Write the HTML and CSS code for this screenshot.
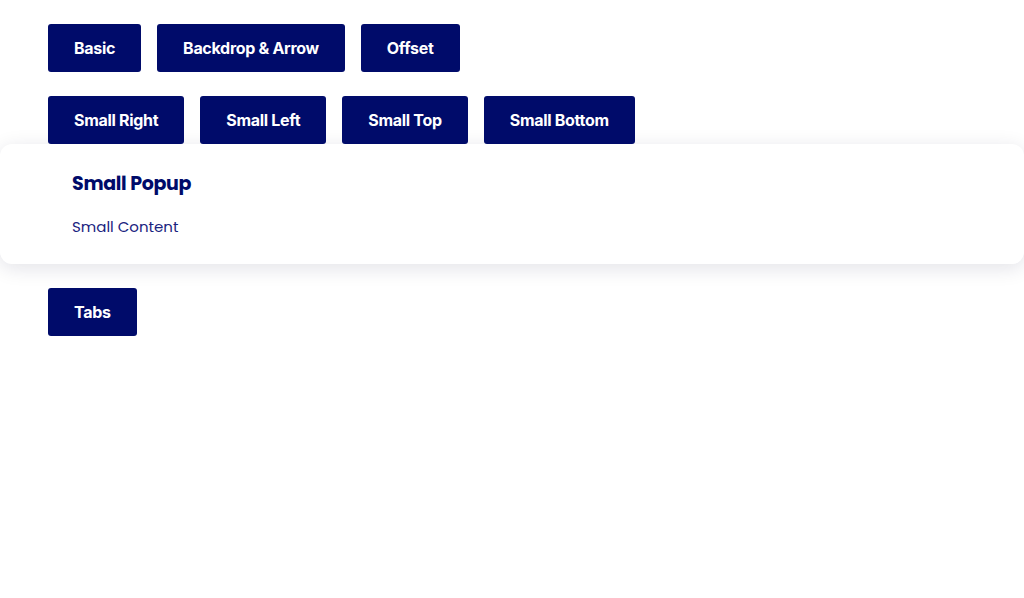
FILE: index.html
```html
<!DOCTYPE html>
<html>
<head>
<meta charset="utf-8">
<link rel="stylesheet" href="styles.css">
</head>
<body>
<div class="page">
  <div class="row">
    <button class="btn">Basic</button>
    <button class="btn">Backdrop &amp; Arrow</button>
    <button class="btn">Offset</button>
  </div>
  <div class="row">
    <button class="btn">Small Right</button>
    <button class="btn">Small Left</button>
    <button class="btn">Small Top</button>
    <button class="btn">Small Bottom</button>
  </div>
</div>
<div class="popup">
  <div class="popup-title">Small Popup</div>
  <div class="popup-content">Small Content</div>
</div>
<div class="page tabs-area">
  <div class="row">
    <button class="btn">Tabs</button>
  </div>
</div>
</body>
</html>
```
FILE: styles.css
```css
html, body {
  margin: 0;
  padding: 0;
  background: #fff;
  font-family: Inter, "Noto Sans", sans-serif;
}
.page {
  padding: 24px 48px 0;
  display: flex;
  flex-direction: column;
  gap: 24px;
}
.row {
  display: flex;
  gap: 16px;
}
.btn {
  height: 48px;
  padding: 0 26px 1px;
  border: none;
  border-radius: 3px;
  background: #000b6a;
  color: #fff;
  font-family: Inter, "Noto Sans", sans-serif;
  font-weight: 700;
  font-size: 16px;
  letter-spacing: -0.3px;
}
.popup {
  height: 120px;
  box-sizing: border-box;
  padding: 28px 72px 0;
  background: #fff;
  border-radius: 12px;
  box-shadow: 0 4px 20px rgba(20, 20, 60, 0.12);
  color: #000b6a;
}
.popup-title {
  font-family: "Poppins", Inter, sans-serif;
  font-weight: 700;
  font-size: 19px;
  line-height: 24px;
  letter-spacing: -0.3px;
}
.popup-content {
  margin-top: 20px;
  font-family: "Poppins", Inter, sans-serif;
  font-size: 15px;
  line-height: 22px;
  color: #1a2380;
}
.tabs-area {
  padding-top: 24px;
}
```
